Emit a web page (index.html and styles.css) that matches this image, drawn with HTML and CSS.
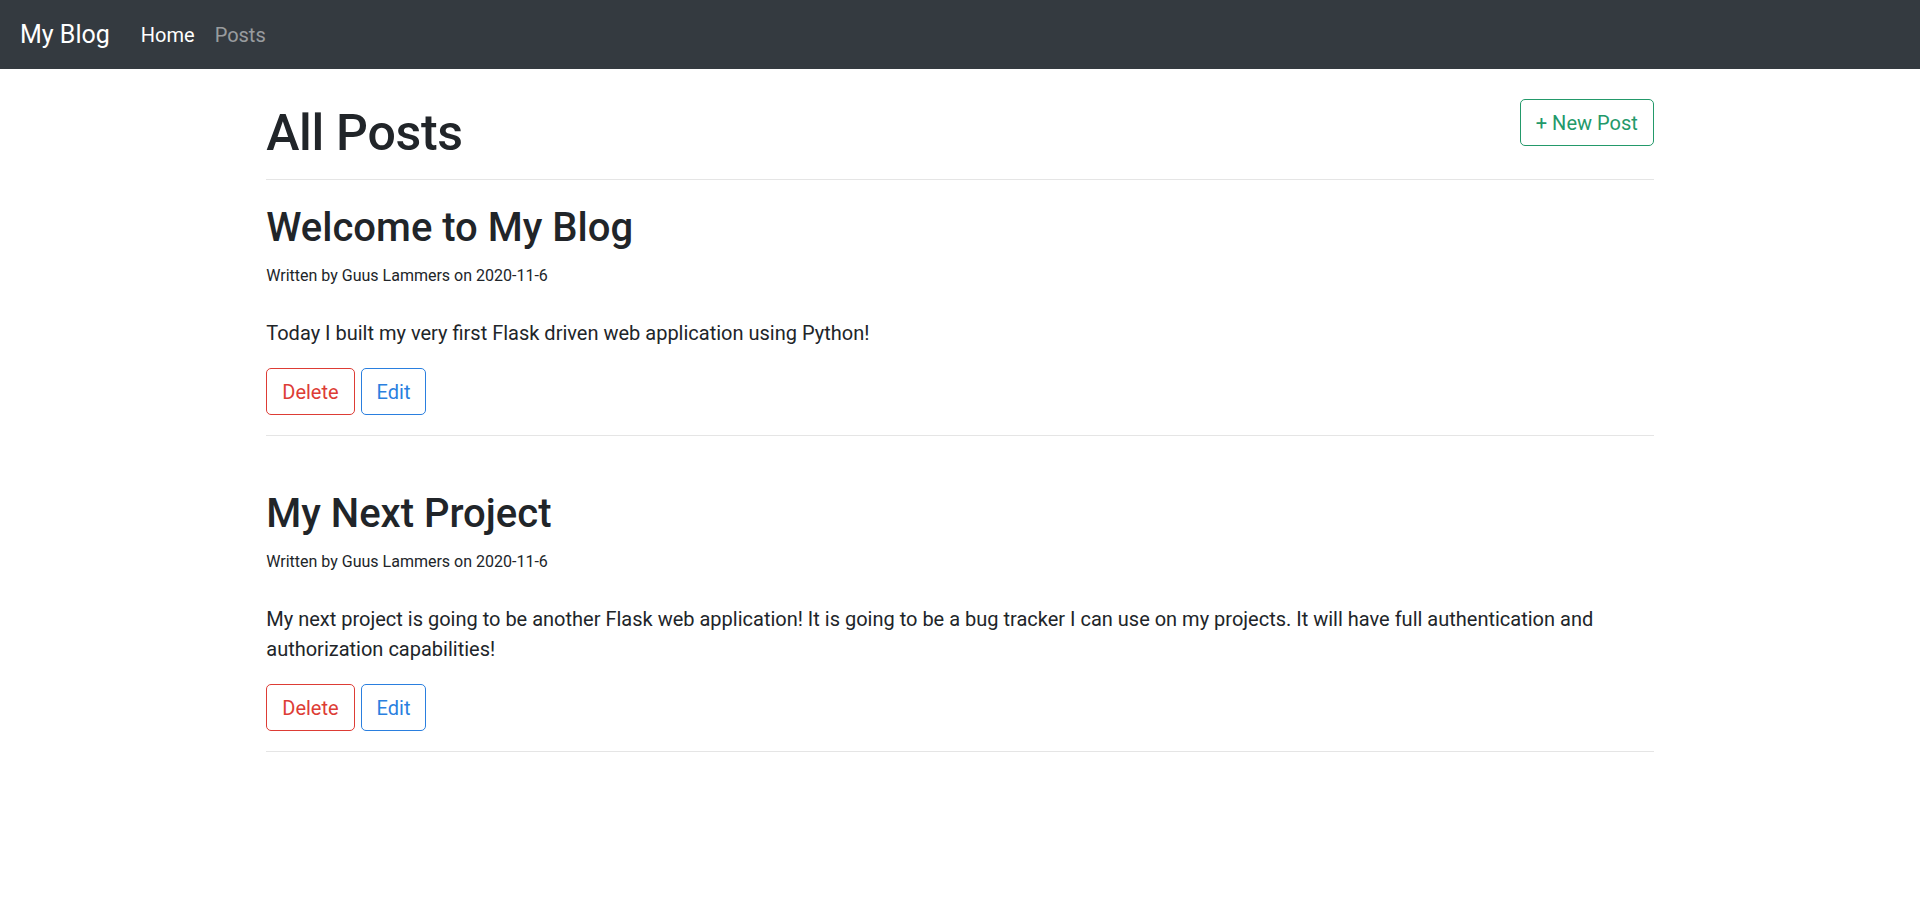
FILE: index.html
```html
<!DOCTYPE html>
<html lang="en">
<head>
<meta charset="utf-8">
<title>My Blog</title>
<link rel="stylesheet" href="styles.css">
</head>
<body>
<nav class="navbar">
  <a class="brand" href="#">My Blog</a>
  <ul class="nav">
    <li><a class="nav-link active" href="#">Home</a></li>
    <li><a class="nav-link" href="#">Posts</a></li>
  </ul>
</nav>
<div class="spacer"></div>
<main class="container">
  <div class="page-head">
    <h1 class="page-title">All Posts</h1>
    <a class="btn btn-success" href="#">+ New Post</a>
  </div>
  <hr class="rule rule-head">
  <article class="post">
    <h2 class="post-title">Welcome to My Blog</h2>
    <div class="meta"><small>Written by Guus Lammers on 2020-11-6</small></div>
    <div class="spacer"></div>
    <p class="post-body">Today I built my very first Flask driven web application using Python!</p>
    <div class="actions">
      <a class="btn btn-danger" href="#">Delete</a>
      <a class="btn btn-primary" href="#">Edit</a>
    </div>
    <hr class="rule">
  </article>
  <div class="spacer"></div>
  <article class="post">
    <h2 class="post-title">My Next Project</h2>
    <div class="meta"><small>Written by Guus Lammers on 2020-11-6</small></div>
    <div class="spacer"></div>
    <p class="post-body">My next project is going to be another Flask web application! It is going to be a bug tracker I can use on my projects. It will have full authentication and authorization capabilities!</p>
    <div class="actions">
      <a class="btn btn-danger" href="#">Delete</a>
      <a class="btn btn-primary" href="#">Edit</a>
    </div>
    <hr class="rule">
  </article>
</main>
</body>
</html>
```
FILE: styles.css
```css
html { font-size: 20px; }
* { box-sizing: border-box; }
body {
  margin: 0;
  font-family: Roboto, "Liberation Sans", sans-serif;
  font-size: 1rem;
  line-height: 1.5;
  color: #212529;
  background: #fff;
}
a { text-decoration: none; }

.navbar {
  display: flex;
  align-items: center;
  background: #343a40;
  padding: 0.5rem 1rem;
  height: 69px;
}
.brand {
  color: #fff;
  font-size: 1.25rem;
  line-height: 1.5;
  padding: 0.3125rem 0;
  margin-right: 1.05rem;
}
.nav {
  display: flex;
  list-style: none;
  margin: 0;
  padding: 0;
}
.nav-link {
  display: block;
  padding: 0.5rem;
  color: rgba(255,255,255,0.5);
}
.nav-link.active { color: #fff; }

.spacer { height: 30px; }

.container {
  max-width: 1425px;
  margin: 0 auto;
  padding: 0 18.75px;
}
.page-head {
  display: flex;
  justify-content: space-between;
  align-items: flex-start;
}
.page-title {
  margin: 0;
  padding-top: 4px;
  font-size: 50px;
  font-weight: 500;
  line-height: 60px;
  letter-spacing: -0.3px;
}
.rule {
  margin: 20px 0;
  border: 0;
  border-top: 1px solid rgba(0,0,0,0.1);
}
.rule-head { margin-top: 16px; }
.post-title {
  margin: 0 0 6px;
  padding-top: 4px;
  font-size: 40px;
  font-weight: 500;
  line-height: 48px;
}
.meta { padding-top: 1px; height: 30px; }
.meta small { font-size: 16px; }
.post-body { margin: 0 0 20px; }
.actions { display: flex; gap: 6px; }
.btn {
  display: inline-block;
  padding: 0.375rem 0.75rem;
  font-size: 1rem;
  line-height: 1.5;
  border: 1px solid;
  border-radius: 5px;
  background: transparent;
}
.btn-success { color: #23996a; border-color: #23996a; }
.btn-danger { color: #dd3c35; border-color: #dd3c35; }
.btn-primary { color: #2a7fdf; border-color: #2a7fdf; }
```
